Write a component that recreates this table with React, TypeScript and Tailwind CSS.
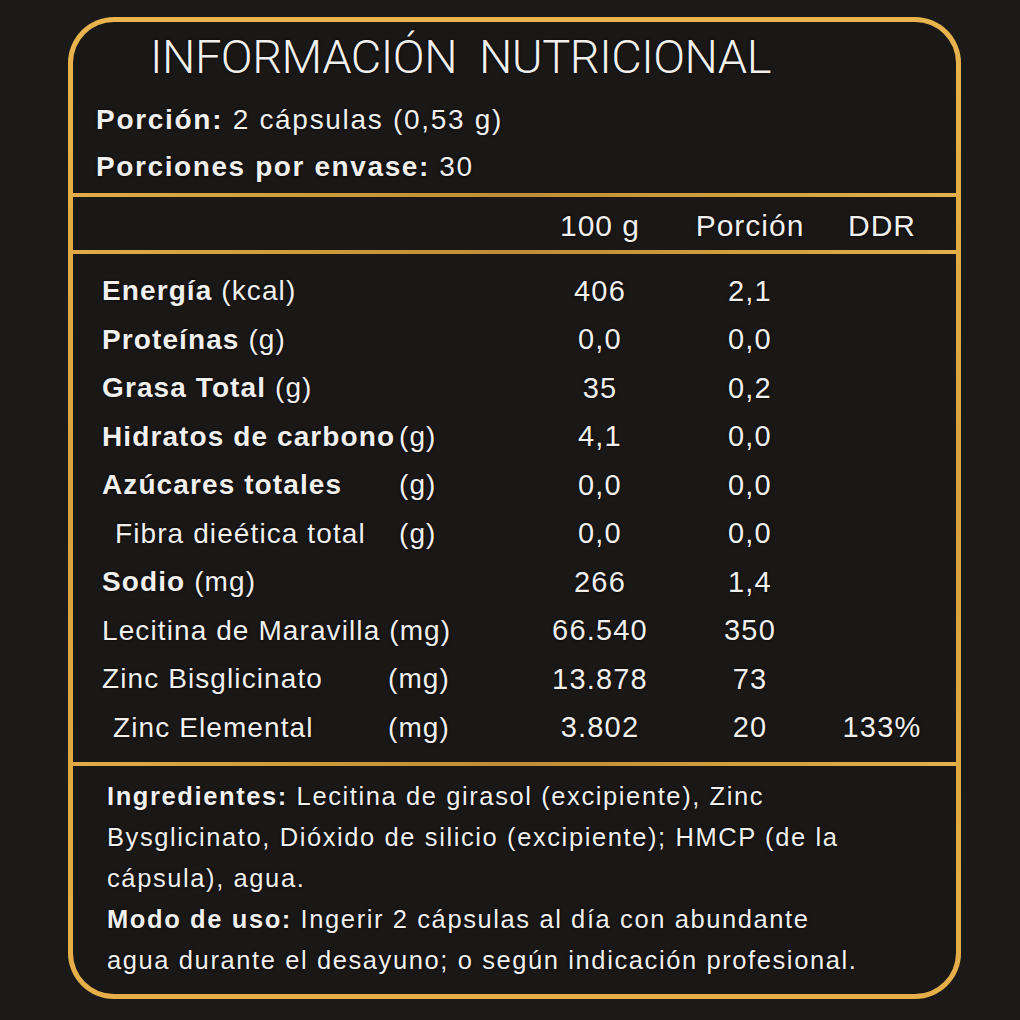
type Row = {
  name: string;
  bold: boolean;
  unit: string;
  nameCls?: string;
  indent?: string;
  v1: string;
  v2: string;
  ddr?: string;
};

const rows: Row[] = [
  { name: "Energía", bold: true, unit: "(kcal)", v1: "406", v2: "2,1" },
  { name: "Proteínas", bold: true, unit: "(g)", v1: "0,0", v2: "0,0" },
  { name: "Grasa Total", bold: true, unit: "(g)", v1: "35", v2: "0,2" },
  { name: "Hidratos de carbono", bold: true, unit: "(g)", nameCls: "w-[297px]", v1: "4,1", v2: "0,0" },
  { name: "Azúcares totales", bold: true, unit: "(g)", nameCls: "w-[297px]", v1: "0,0", v2: "0,0" },
  { name: "Fibra dieética total", bold: false, unit: "(g)", nameCls: "w-[284px]", indent: "ml-[13px]", v1: "0,0", v2: "0,0" },
  { name: "Sodio", bold: true, unit: "(mg)", v1: "266", v2: "1,4" },
  { name: "Lecitina de Maravilla", bold: false, unit: "(mg)", v1: "66.540", v2: "350" },
  { name: "Zinc Bisglicinato", bold: false, unit: "(mg)", nameCls: "w-[286px]", v1: "13.878", v2: "73" },
  { name: "Zinc Elemental", bold: false, unit: "(mg)", nameCls: "w-[275px]", indent: "ml-[11px]", v1: "3.802", v2: "20", ddr: "133%" },
];

function GoldLine() {
  return <div className="h-[4px] shrink-0 bg-linear-to-r from-[#e2ab46] via-[#c18d34] to-[#e6b04b]" />;
}

function NutritionRow({ row }: { row: Row }) {
  return (
    <div className="flex h-[48.5px] items-center">
      <div className="w-[467px] pl-[29px] text-[28px] tracking-[1.1px]">
        <div className={`flex items-center ${row.indent ?? ""}`}>
          {row.nameCls ? (
            <>
              <span className={`${row.nameCls} shrink-0 ${row.bold ? "font-bold" : ""}`}>{row.name}</span>
              <span>{row.unit}</span>
            </>
          ) : (
            <span>
              <span className={row.bold ? "font-bold" : ""}>{row.name}</span> {row.unit}
            </span>
          )}
        </div>
      </div>
      <div className="w-[120px] text-center text-[29px] tracking-[1.2px]">{row.v1}</div>
      <div className="w-[180px] text-center text-[29px] tracking-[1.2px]">{row.v2}</div>
      <div className="w-[84px] text-center text-[29px] tracking-[1.2px]">{row.ddr ?? ""}</div>
    </div>
  );
}

export default function App() {
  return (
    <div className="h-[1020px] w-[1020px] bg-[#1c1a18] pl-[68px] pt-[17px] font-['Liberation_Sans',Arial,sans-serif] text-[#f1f0ee] [text-shadow:0_0_3px_rgba(0,0,0,0.9)]">
      <div className="h-[982px] w-[893px] rounded-[46px] bg-linear-to-b from-[#e9b34d] via-[#d8a13d] to-[#e6af49] p-[5px]">
        <div className="flex h-full flex-col overflow-hidden rounded-[41px] bg-[#1a1816]">
          {/* encabezado */}
          <div className="flex h-[74px] shrink-0 items-center whitespace-pre pb-1 pl-[77px] font-['Roboto',sans-serif] text-[47px] font-light tracking-[-0.5px]">
            INFORMACIÓN  NUTRICIONAL
          </div>
          <div className="flex h-[47px] shrink-0 items-center pl-[23px] text-[28px] tracking-[1.7px]">
            <span className="font-bold">Porción:</span>&nbsp;2 cápsulas (0,53 g)
          </div>
          <div className="flex h-[47px] shrink-0 items-center pl-[23px] text-[28px] tracking-[1.6px]">
            <span className="font-bold">Porciones por envase:</span>&nbsp;30
          </div>
          <div className="h-[3px] shrink-0" />
          <GoldLine />

          {/* columnas */}
          <div className="flex h-[53px] shrink-0 items-center pt-1 text-[30px] tracking-[1px]">
            <div className="w-[467px]" />
            <div className="w-[120px] text-center">100 g</div>
            <div className="w-[180px] text-center">Porción</div>
            <div className="w-[84px] text-center">DDR</div>
          </div>
          <GoldLine />

          <div className="shrink-0 pb-[10px] pt-[13px]">
            {rows.map((r) => (
              <NutritionRow key={r.name} row={r} />
            ))}
          </div>
          <GoldLine />

          {/* ingredientes */}
          <div className="flex-1 whitespace-nowrap pl-[34px] pt-[10px] text-[25.5px] leading-[41px] tracking-[1.6px]">
            <div>
              <span className="font-bold">Ingredientes:</span> Lecitina de girasol (excipiente), Zinc
            </div>
            <div>Bysglicinato, Dióxido de silicio (excipiente); HMCP (de la</div>
            <div>cápsula), agua.</div>
            <div>
              <span className="font-bold">Modo de uso:</span> Ingerir 2 cápsulas al día con abundante
            </div>
            <div>agua durante el desayuno; o según indicación profesional.</div>
          </div>
        </div>
      </div>
    </div>
  );
}
